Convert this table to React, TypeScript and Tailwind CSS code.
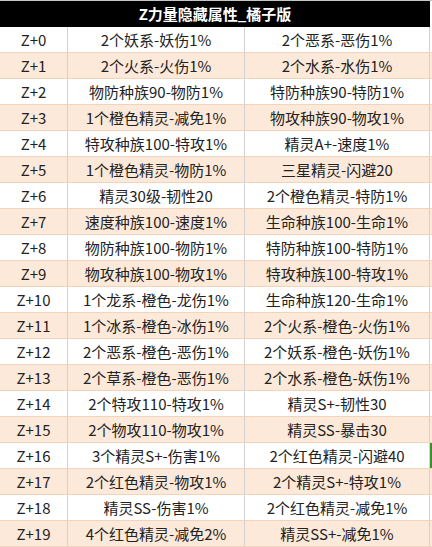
const rows: [string, string, string][] = [
  ["Z+0", "2个妖系-妖伤1%", "2个恶系-恶伤1%"],
  ["Z+1", "2个火系-火伤1%", "2个水系-水伤1%"],
  ["Z+2", "物防种族90-物防1%", "特防种族90-特防1%"],
  ["Z+3", "1个橙色精灵-减免1%", "物攻种族90-物攻1%"],
  ["Z+4", "特攻种族100-特攻1%", "精灵A+-速度1%"],
  ["Z+5", "1个橙色精灵-物防1%", "三星精灵-闪避20"],
  ["Z+6", "精灵30级-韧性20", "2个橙色精灵-特防1%"],
  ["Z+7", "速度种族100-速度1%", "生命种族100-生命1%"],
  ["Z+8", "物防种族100-物防1%", "特防种族100-特防1%"],
  ["Z+9", "物攻种族100-物攻1%", "特攻种族100-特攻1%"],
  ["Z+10", "1个龙系-橙色-龙伤1%", "生命种族120-生命1%"],
  ["Z+11", "1个冰系-橙色-冰伤1%", "2个火系-橙色-火伤1%"],
  ["Z+12", "2个恶系-橙色-恶伤1%", "2个妖系-橙色-妖伤1%"],
  ["Z+13", "2个草系-橙色-恶伤1%", "2个水系-橙色-妖伤1%"],
  ["Z+14", "2个特攻110-特攻1%", "精灵S+-韧性30"],
  ["Z+15", "2个物攻110-物攻1%", "精灵SS-暴击30"],
  ["Z+16", "3个精灵S+-伤害1%", "2个红色精灵-闪避40"],
  ["Z+17", "2个红色精灵-物攻1%", "2个精灵S+-特攻1%"],
  ["Z+18", "精灵SS-伤害1%", "2个红色精灵-减免1%"],
  ["Z+19", "4个红色精灵-减免2%", "精灵SS+-减免1%"],
];

export default function App() {
  return (
    <div
      className="w-[432px] h-[547px] overflow-hidden bg-white border-t border-[#c6c6c6] text-[#222]"
      style={{ fontFamily: '"Noto Sans CJK SC", "Noto Sans", sans-serif' }}
    >
      <div className="flex h-[26px]">
        <div className="w-[430px] bg-black text-white font-bold text-[15px] flex items-center justify-center">
          Z力量隐藏属性_橘子版
        </div>
        <div className="flex-1 bg-white" />
      </div>
      {rows.map(([z, a, b], i) => (
        <div
          key={z}
          className={
            "flex h-[26px] border-b border-[#f2d4bb] text-[15px] leading-none " +
            (i % 2 === 0 ? "bg-white" : "bg-[#fde9d9]")
          }
        >
          <div className="w-[68px] border-r border-[#d2d2d2] flex items-center justify-center">{z}</div>
          <div className="w-[177px] border-r border-[#d2d2d2] flex items-center justify-center">{a}</div>
          <div className="w-[185px] border-r border-[#d2d2d2] flex items-center justify-center">{b}</div>
          <div className={"flex-1 " + (z === "Z+16" ? "bg-[#3f8f2f]" : "")} />
        </div>
      ))}
    </div>
  );
}
